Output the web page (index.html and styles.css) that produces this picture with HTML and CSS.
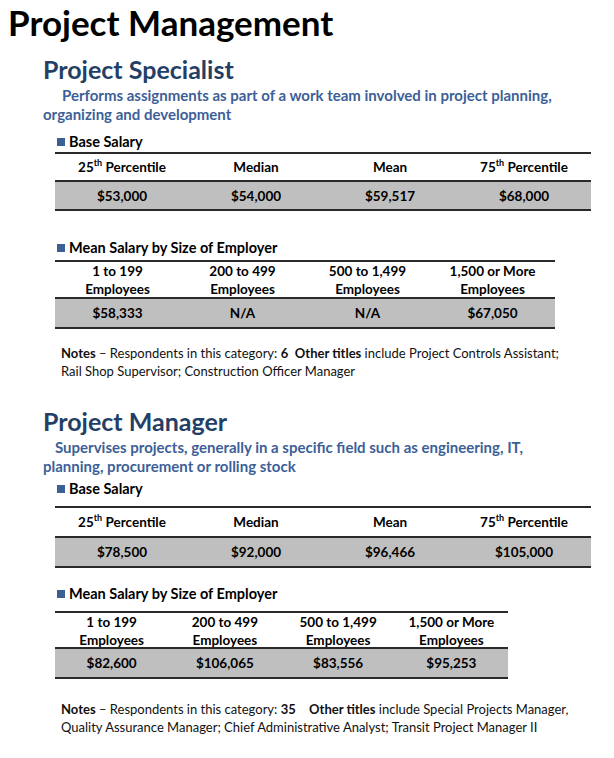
FILE: index.html
```html
<!DOCTYPE html>
<html>
<head>
<meta charset="utf-8">
<link rel="stylesheet" href="styles.css">
</head>
<body>
<h1 class="page-title">Project Management</h1>

<section class="job job-1">
  <h2 class="job-title">Project Specialist</h2>
  <p class="job-desc">Performs assignments as part of a work team involved in project planning,<br>organizing and development</p>

  <h3 class="sub sub-base"><span class="bullet"></span>Base Salary</h3>
  <div class="tbl tbl-wide tbl-base">
    <div class="row hdr"><div><span>25<sup>th</sup> Percentile</span></div><div><span>Median</span></div><div><span>Mean</span></div><div><span>75<sup>th</sup> Percentile</span></div></div>
    <div class="row val"><div><span>$53,000</span></div><div><span>$54,000</span></div><div><span>$59,517</span></div><div><span>$68,000</span></div></div>
  </div>

  <h3 class="sub sub-size"><span class="bullet"></span>Mean Salary by Size of Employer</h3>
  <div class="tbl tbl-mid tbl-size">
    <div class="row hdr hdr-2"><div><span>1 to 199<br>Employees</span></div><div><span>200 to 499<br>Employees</span></div><div><span>500 to 1,499<br>Employees</span></div><div><span>1,500 or More<br>Employees</span></div></div>
    <div class="row val"><div><span>$58,333</span></div><div><span>N/A</span></div><div><span>N/A</span></div><div><span>$67,050</span></div></div>
  </div>

  <p class="notes"><b>Notes</b> – Respondents in this category: <b>6</b>&nbsp;&nbsp;<b>Other titles</b> include Project Controls Assistant;<br>Rail Shop Supervisor; Construction Officer Manager</p>
</section>

<section class="job job-2">
  <h2 class="job-title">Project Manager</h2>
  <p class="job-desc">Supervises projects, generally in a specific field such as engineering, IT,<br>planning, procurement or rolling stock</p>

  <h3 class="sub sub-base"><span class="bullet"></span>Base Salary</h3>
  <div class="tbl tbl-wide tbl-base">
    <div class="row hdr"><div><span>25<sup>th</sup> Percentile</span></div><div><span>Median</span></div><div><span>Mean</span></div><div><span>75<sup>th</sup> Percentile</span></div></div>
    <div class="row val"><div><span>$78,500</span></div><div><span>$92,000</span></div><div><span>$96,466</span></div><div><span>$105,000</span></div></div>
  </div>

  <h3 class="sub sub-size"><span class="bullet"></span>Mean Salary by Size of Employer</h3>
  <div class="tbl tbl-narrow tbl-size">
    <div class="row hdr hdr-2"><div><span>1 to 199<br>Employees</span></div><div><span>200 to 499<br>Employees</span></div><div><span>500 to 1,499<br>Employees</span></div><div><span>1,500 or More<br>Employees</span></div></div>
    <div class="row val"><div><span>$82,600</span></div><div><span>$106,065</span></div><div><span>$83,556</span></div><div><span>$95,253</span></div></div>
  </div>

  <p class="notes"><b>Notes</b> – Respondents in this category: <b>35</b>&nbsp;&nbsp;&nbsp;&nbsp;<b>Other titles</b> include Special Projects Manager,<br>Quality Assurance Manager; Chief Administrative Analyst; Transit Project Manager II</p>
</section>
</body>
</html>
```

FILE: styles.css
```css
*, *::before, *::after {
  box-sizing: border-box;
}
html, body {
  margin: 0;
  padding: 0;
  background: #ffffff;
}
body {
  font-family: Lato, "Open Sans", sans-serif;
  color: #000;
  width: 614px;
}
.page-title {
  margin: 0;
  padding: 0 0 0 8px;
  font-size: 35px;
  line-height: 44px;
  font-weight: 700;
}
.job {
  padding-left: 43px;
}
.job-1 { margin-top: 9px; }
.job-2 { margin-top: 25px; }
.job-title {
  margin: 0;
  font-size: 25px;
  line-height: 33px;
  font-weight: 700;
  color: #243f66;
}
.job-desc {
  margin: 0;
  font-size: 15px;
  line-height: 19px;
  font-weight: 700;
  color: #3d5f98;
  text-indent: 19px;
  white-space: nowrap;
}
.job-2 .job-desc { text-indent: 12px; }
.sub {
  margin: 0 0 0 14px;
  font-size: 14.5px;
  line-height: 18px;
  font-weight: 700;
  display: flex;
  align-items: center;
}
.bullet {
  width: 8px;
  height: 8px;
  background: #3c5f96;
  margin-right: 4px;
}
.job-1 .sub-base { margin-top: 9px; }
.job-1 .sub-size { margin-top: 28px; }
.job-2 .sub-base { margin-top: 4px; }
.job-2 .sub-size { margin-top: 17px; }

.tbl {
  margin-left: 12px;
  border-top: 2px solid #2a2a2a;
  border-bottom: 2px solid #2a2a2a;
  font-size: 13.5px;
  font-weight: 700;
}
.job-1 .tbl-base { margin-top: 1px; }
.job-1 .tbl-size { margin-top: 3px; }
.job-2 .tbl-base { margin-top: 8px; }
.job-2 .tbl-size { margin-top: 8px; }
.tbl-wide { width: 536px; }
.tbl-mid { width: 500px; }
.tbl-narrow { width: 453px; }
.row {
  display: grid;
  grid-template-columns: repeat(4, 1fr);
}
.row > div {
  display: flex;
  align-items: center;
  justify-content: center;
  text-align: center;
}
.hdr {
  height: 28px;
  border-bottom: 2px solid #2a2a2a;
}
.hdr-2 {
  height: 37px;
  line-height: 18px;
}
.val {
  height: 28px;
  background: #bfbfbf;
}
.job-1 .tbl-base .val { height: 27px; }
.job-2 .tbl-base .hdr { height: 30px; }
.job-2 .tbl-size .hdr { height: 36px; }
.tbl sup {
  font-size: 9px;
  line-height: 0;
  position: relative;
  top: -1px;
}
.notes {
  margin: 0 0 0 18px;
  font-size: 13px;
  line-height: 18px;
  color: #111;
  white-space: nowrap;
}
.job-1 .notes { margin-top: 15px; }
.job-2 .notes { margin-top: 21px; }
.notes b { font-weight: 700; }
```
